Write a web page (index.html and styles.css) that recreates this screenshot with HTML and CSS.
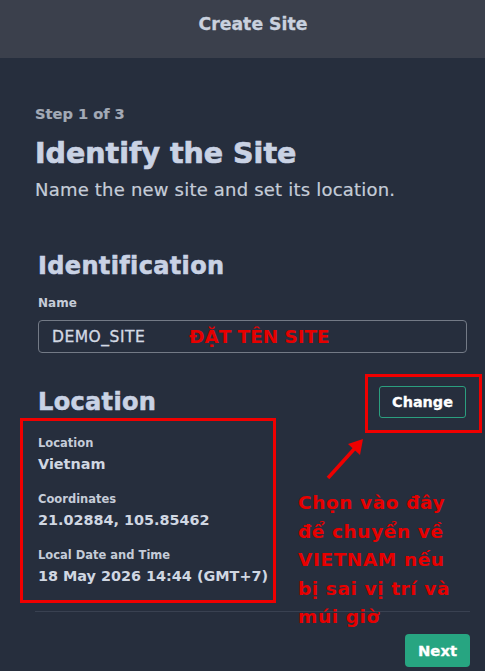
FILE: index.html
```html
<!DOCTYPE html>
<html lang="en">
<head>
<meta charset="utf-8">
<title>Create Site</title>
<link rel="stylesheet" href="styles.css">
</head>
<body>
<div class="page">
  <header class="topbar"><span class="topbar-title">Create Site</span></header>
  <main class="content">
    <div class="step">Step 1 of 3</div>
    <h1 class="title">Identify the Site</h1>
    <p class="subtitle">Name the new site and set its location.</p>

    <section class="section">
      <h2 class="section-title">Identification</h2>
      <div class="field-label">Name</div>
      <div class="input">
        <span class="input-value">DEMO_SITE</span>
        <span class="note-inline">ĐẶT TÊN SITE</span>
      </div>

      <div class="loc-row">
        <h2 class="section-title">Location</h2>
        <button class="btn-outline">Change</button>
      </div>

      <dl class="details">
        <dt>Location</dt>
        <dd>Vietnam</dd>
        <dt>Coordinates</dt>
        <dd>21.02884, 105.85462</dd>
        <dt>Local Date and Time</dt>
        <dd>18 May 2026 14:44 (GMT+7)</dd>
      </dl>
    </section>

    <div class="divider"></div>
    <div class="footer"><button class="btn-primary">Next</button></div>
  </main>

  <div class="mark mark-change"></div>
  <div class="mark mark-location"></div>
  <svg class="arrow" width="50" height="56" viewBox="0 0 50 56">
    <line x1="8" y1="47" x2="36" y2="16" stroke="#ee0000" stroke-width="3.5"/>
    <polygon points="43,8 40,24 28,13" fill="#ee0000"/>
  </svg>
  <div class="note-block">Chọn vào đây<br>để chuyển về<br>VIETNAM nếu<br>bị sai vị trí và<br>múi giờ</div>
</div>
</body>
</html>
```

FILE: styles.css
```css
html, body {
  margin: 0;
  padding: 0;
  background: #262e3d;
}
body {
  font-family: "DejaVu Sans", "Open Sans", sans-serif;
  color: #c8d0de;
}
.page {
  position: relative;
  width: 485px;
  height: 671px;
  overflow: hidden;
}
.topbar {
  height: 58px;
  background: #3b404c;
  display: flex;
  align-items: center;
  justify-content: center;
  padding-left: 21px;
  box-sizing: border-box;
}
.topbar-title {
  font-size: 17.3px;
  font-weight: 700;
  color: #c9d1de;
  margin-top: -10px;
  -webkit-text-stroke: 0.3px #c9d1de;
}
.content {
  padding: 0 15px 0 35px;
}
.step {
  margin-top: 46px;
  font-size: 14.6px;
  line-height: 20px;
  font-weight: 700;
  color: #a3aab6;
  -webkit-text-stroke: 0.2px #a3aab6;
}
.title {
  margin: 12px 0 0;
  font-size: 28.5px;
  line-height: 36px;
  font-weight: 700;
  color: #c9d2e4;
  -webkit-text-stroke: 0.7px #c9d2e4;
}
.subtitle {
  margin: 6px 0 0;
  font-size: 18px;
  line-height: 24px;
  letter-spacing: 0.2px;
  color: #c5ccd8;
  -webkit-text-stroke: 0.2px #c5ccd8;
}
.section {
  padding-left: 3px;
}
.section-title {
  margin: 49px 0 0;
  font-size: 24px;
  line-height: 30px;
  letter-spacing: 0.35px;
  font-weight: 700;
  color: #c9d2e4;
  -webkit-text-stroke: 0.6px #c9d2e4;
}
.field-label {
  margin-top: 14px;
  font-size: 12px;
  line-height: 16px;
  font-weight: 700;
  color: #c5ccd8;
}
.input {
  margin: 9px 3px 0 0;
  height: 33px;
  box-sizing: border-box;
  border: 1px solid #737a86;
  border-radius: 4px;
  display: flex;
  align-items: center;
  padding-left: 13px;
}
.input-value {
  font-size: 15.5px;
  letter-spacing: 0.5px;
  color: #d4dae4;
  width: 137px;
  -webkit-text-stroke: 0.35px #d4dae4;
}
.note-inline {
  font-size: 18.4px;
  font-weight: 700;
  color: #e60000;
}
.loc-row {
  margin-top: 33px;
  display: flex;
  justify-content: space-between;
  align-items: center;
  padding-right: 4px;
  height: 32px;
}
.loc-row .section-title {
  margin: 0;
}
.btn-outline {
  height: 32px;
  width: 87px;
  background: transparent;
  border: 1.5px solid #2b9f7f;
  border-radius: 3px;
  font-family: inherit;
  font-size: 14.4px;
  font-weight: 700;
  color: #ffffff;
  padding: 0;
  -webkit-text-stroke: 0.3px #ffffff;
}
.details {
  margin: 17px 0 0;
}
.details dt {
  font-size: 11.5px;
  line-height: 16px;
  font-weight: 700;
  color: #c5ccd8;
}
.details dd {
  margin: 3px 0 17px;
  font-size: 14.4px;
  line-height: 20px;
  font-weight: 700;
  color: #d0d7e2;
}
.details dd:last-child {
  margin-bottom: 0;
}
.divider {
  margin-top: 25px;
  height: 1px;
  background: #394151;
}
.footer {
  margin-top: 22px;
  display: flex;
  justify-content: flex-end;
}
.btn-primary {
  height: 33px;
  width: 65px;
  border: none;
  border-radius: 4px;
  background: #27a581;
  font-family: inherit;
  font-size: 14.8px;
  font-weight: 700;
  color: #ffffff;
  padding: 0;
  -webkit-text-stroke: 0.3px #ffffff;
}
.mark {
  position: absolute;
  border: 3px solid #f00000;
  box-sizing: border-box;
}
.mark-change {
  left: 365px;
  top: 374px;
  width: 117px;
  height: 59px;
}
.mark-location {
  left: 20px;
  top: 418px;
  width: 256px;
  height: 185px;
}
.arrow {
  position: absolute;
  left: 320px;
  top: 431px;
}
.note-block {
  position: absolute;
  left: 298px;
  top: 489px;
  font-size: 18.5px;
  line-height: 28.5px;
  letter-spacing: 0.6px;
  font-weight: 700;
  color: #e60000;
}
```
